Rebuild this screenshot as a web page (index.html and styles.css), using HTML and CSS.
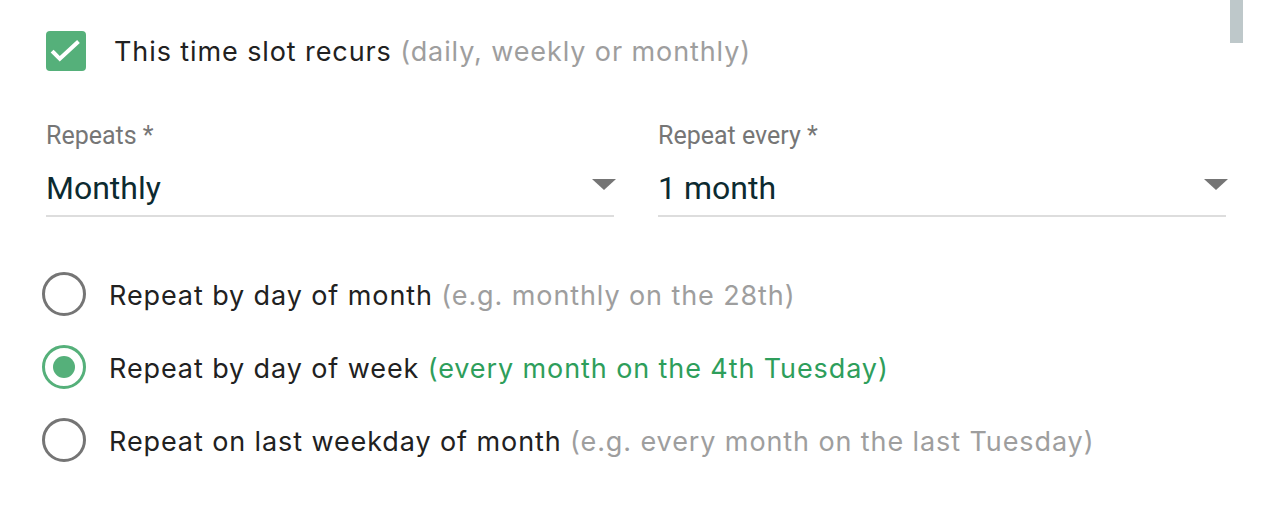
FILE: index.html
```html
<!DOCTYPE html>
<html lang="en">
<head>
<meta charset="utf-8">
<title>Recurrence</title>
<link rel="stylesheet" href="styles.css">
</head>
<body>
<div class="scrollbar"></div>
<main class="page">
  <label class="check-row">
    <span class="checkbox">
      <svg width="40" height="40" viewBox="0 0 40 40"><path d="M7.5 21.5 L13.8 27.8 L31 11.8" fill="none" stroke="#fff" stroke-width="4" stroke-linecap="square"/></svg>
    </span>
    <span class="check-text">This time slot recurs <span class="hint">(daily, weekly or monthly)</span></span>
  </label>

  <div class="fields">
    <div class="field">
      <div class="field-label">Repeats *</div>
      <div class="field-control">
        <span class="field-value">Monthly</span>
        <span class="caret"></span>
      </div>
    </div>
    <div class="field">
      <div class="field-label">Repeat every *</div>
      <div class="field-control">
        <span class="field-value">1 month</span>
        <span class="caret"></span>
      </div>
    </div>
  </div>

  <div class="radios">
    <div class="radio-row">
      <span class="radio"></span>
      <span class="radio-text">Repeat by day of month <span class="hint">(e.g. monthly on the 28th)</span></span>
    </div>
    <div class="radio-row">
      <span class="radio checked"></span>
      <span class="radio-text">Repeat by day of week <span class="hint green">(every month on the 4th Tuesday)</span></span>
    </div>
    <div class="radio-row">
      <span class="radio"></span>
      <span class="radio-text">Repeat on last weekday of month <span class="hint">(e.g. every month on the last Tuesday)</span></span>
    </div>
  </div>
</main>
</body>
</html>
```

FILE: styles.css
```css
html, body {
  margin: 0;
  padding: 0;
  background: #ffffff;
}

body {
  font-family: Inter, "Noto Sans", sans-serif;
  color: #212121;
  width: 1270px;
  height: 514px;
  overflow: hidden;
  position: relative;
}

.scrollbar {
  position: absolute;
  left: 1230px;
  top: 0;
  width: 13px;
  height: 43px;
  background: #bec8ca;
}

.page {
  padding: 31px 0 0 46px;
  display: flex;
  flex-direction: column;
}

.check-row {
  display: flex;
  align-items: center;
  gap: 28px;
  height: 40px;
}

.checkbox {
  width: 40px;
  height: 40px;
  border-radius: 4px;
  background: #55b07a;
  display: flex;
  flex: none;
}

.check-text {
  font-size: 27px;
  letter-spacing: 0.9px;
  color: #212121;
}

.hint {
  color: #9e9e9e;
}

.hint.green {
  color: #2e9e5b;
}

.fields {
  display: flex;
  gap: 44px;
  margin-top: 51px;
  width: 1180px;
}

.field {
  flex: 1;
  font-family: Roboto, "Liberation Sans", sans-serif;
}

.field-label {
  font-size: 25px;
  line-height: 28px;
  color: #767676;
}

.field-control {
  display: flex;
  align-items: flex-end;
  justify-content: space-between;
  height: 57px;
  padding-bottom: 8px;
  border-bottom: 2px solid #dddddd;
}

.field-value {
  font-size: 32px;
  line-height: 38px;
  color: #0c2a30;
}

.caret {
  width: 0;
  height: 0;
  border-left: 12px solid transparent;
  border-right: 12px solid transparent;
  border-top: 11px solid #757575;
  margin-right: -2px;
  margin-bottom: 17px;
}

.radios {
  display: flex;
  flex-direction: column;
  gap: 29px;
  margin-top: 55px;
  margin-left: -4px;
}

.radio-row {
  display: flex;
  align-items: center;
  gap: 23px;
  height: 44px;
}

.radio {
  width: 44px;
  height: 44px;
  box-sizing: border-box;
  border: 3.5px solid #757575;
  border-radius: 50%;
  display: flex;
  align-items: center;
  justify-content: center;
  flex: none;
}

.radio.checked {
  border-color: #55b07a;
}

.radio.checked::after {
  content: "";
  width: 22px;
  height: 22px;
  border-radius: 50%;
  background: #55b07a;
}

.radio-text {
  font-size: 27px;
  letter-spacing: 0.9px;
  color: #212121;
  padding-top: 2px;
}
```
